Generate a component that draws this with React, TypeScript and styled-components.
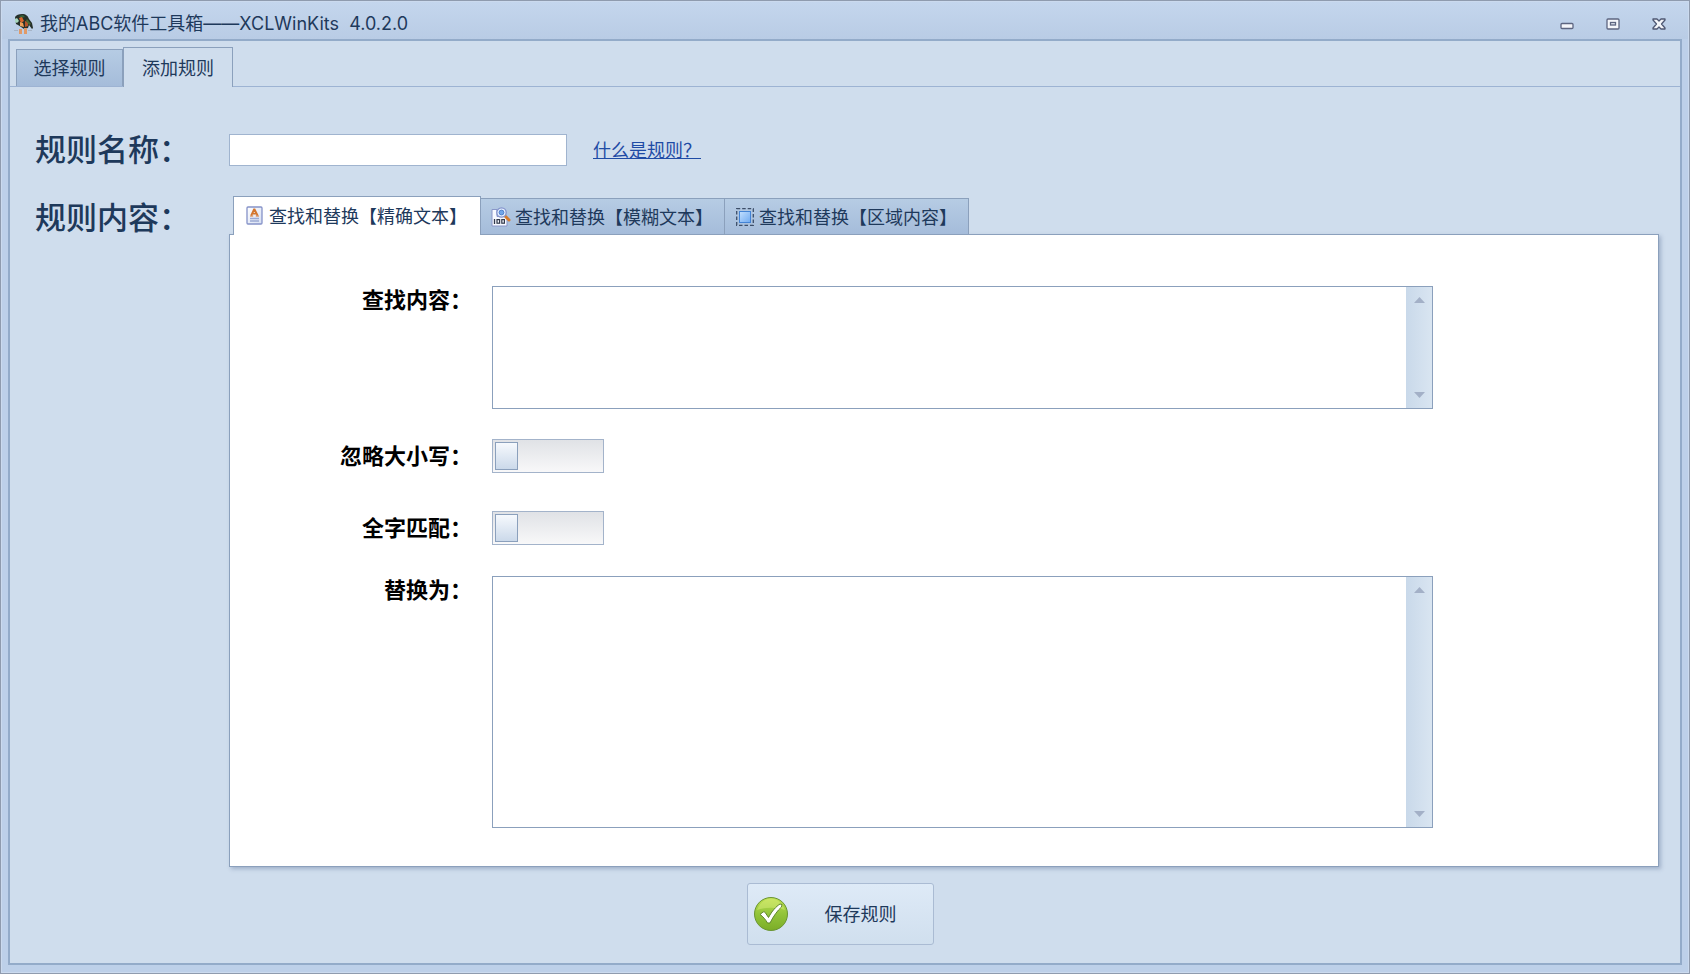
import React, { useState } from "react";
import styled, { createGlobalStyle, css } from "styled-components";

const ui = `"Noto Sans", "Noto Sans CJK SC", sans-serif`;
const navy = "#1e395b";
const line = "#8ba0bc";

const GlobalStyle = createGlobalStyle`
  *, *::before, *::after { box-sizing: border-box; }
  body { margin: 0; font-family: ${ui}; font-size: 18px; line-height: 24px; color: ${navy}; }
  button, input, textarea { font: inherit; color: inherit; }
`;

const Window = styled.div`
  display: flex;
  flex-direction: column;
  min-height: 100vh;
  padding: 0 7px 8px;
  border: 1px solid #8f9bae;
  background: #bdd0e9;
  box-shadow: inset 0 0 0 1px #cbdaee;
`;

const TitleBar = styled.header`
  display: flex;
  align-items: center;
  height: 37px;
  margin: 1px -6px 0;
  padding: 6px 15px 0 12px;
  background: linear-gradient(#c4d6ed, #b9cce5);
`;

const AppTitle = styled.h1`
  flex: 1;
  margin: 0 0 0 6px;
  font-family: Inter, "Noto Sans CJK SC", sans-serif;
  font-size: 18px;
  font-weight: 400;
  line-height: 24px;
  white-space: pre;
`;

const WindowButtons = styled.div`
  display: flex;
  gap: 18px;
`;

const WindowButton = styled.button`
  display: grid;
  place-items: center;
  width: 28px;
  height: 24px;
  padding: 0;
  border: 0;
  background: none;
`;

const Frame = styled.main`
  flex: 1;
  border: 2px solid #93abc9;
  background: #cfdded;
`;

const MainTabs = styled.nav`
  display: flex;
  align-items: flex-end;
  height: 46px;
  padding-left: 6px;
  border-bottom: 1px solid #9db3d3;
`;

const tabFace = css<{ $active: boolean; $page: string }>`
  border: 1px solid ${line};
  border-bottom: 0;
  background: ${(p) => (p.$active ? p.$page : "linear-gradient(#b6cce4, #a5bcda)")};
`;

const MainTab = styled.button<{ $active: boolean; $page: string }>`
  ${tabFace}
  width: ${(p) => (p.$active ? 110 : 107)}px;
  height: ${(p) => (p.$active ? 40 : 37)}px;
  margin-bottom: ${(p) => (p.$active ? -1 : 0)}px;
  padding: 0;
`;

const Form = styled.form`
  display: grid;
  grid-template-columns: 194px 1fr;
  padding: 47px 21px 18px 25px;
`;

const FormLabel = styled.label`
  font-size: 31px;
  font-weight: 500;
  line-height: 30px;
  white-space: nowrap;
`;

const NameRow = styled.div`
  display: flex;
  align-items: center;
  gap: 26px;
  margin-bottom: 30px;
`;

const NameInput = styled.input`
  width: 338px;
  height: 32px;
  padding: 0 6px;
  border: 1px solid #a0b4cf;
  background: #fff;
`;

const HelpLink = styled.a`
  color: #1f4ba5;
`;

const ContentLabel = styled.span`
  padding-top: 6px;
  font-size: 31px;
  font-weight: 500;
  line-height: 30px;
  white-space: nowrap;
`;

const RuleTabs = styled.div`
  display: flex;
  align-items: flex-end;
  height: 38px;
  padding-left: 4px;
`;

const RuleTab = styled.button<{ $active: boolean; $page: string }>`
  ${tabFace}
  display: flex;
  align-items: center;
  gap: 4px;
  width: ${(p) => (p.$active ? 248 : 245)}px;
  height: ${(p) => (p.$active ? 39 : 36)}px;
  margin-bottom: ${(p) => (p.$active ? -1 : 0)}px;
  padding: 0 0 0 ${(p) => (p.$active ? 11 : 10)}px;
  white-space: nowrap;
  z-index: 1;

  & + & {
    margin-left: -1px;
  }
`;

const Panel = styled.section`
  display: grid;
  grid-template-columns: 242px 1fr;
  column-gap: 20px;
  padding: 51px 225px 38px 0;
  border: 1px solid ${line};
  background: #fff;
  box-shadow: 2px 2px 4px rgba(90, 110, 150, 0.4);
`;

const FieldLabel = styled.label`
  color: #000;
  font-size: 22px;
  font-weight: 700;
  line-height: 26px;
  text-align: right;
  white-space: nowrap;
`;

const TextField = styled.div<{ $height: number }>`
  display: flex;
  height: ${(p) => p.$height}px;
  border: 1px solid ${line};
`;

const TextArea = styled.textarea`
  flex: 1;
  min-width: 0;
  padding: 4px 6px;
  border: 0;
  resize: none;
  overflow: hidden;
  background: #fff;
`;

const ScrollRail = styled.div`
  display: flex;
  flex-direction: column;
  justify-content: space-between;
  width: 26px;
  background: linear-gradient(90deg, #c9d9ea, #d9e5f1);
`;

const ScrollButton = styled.button`
  display: grid;
  place-items: center;
  height: 26px;
  padding: 0;
  border: 0;
  background: none;
`;

const Switch = styled.input`
  appearance: none;
  display: flex;
  width: 112px;
  height: 34px;
  margin: 0;
  padding: 2px;
  border: 1px solid #a3b3ca;
  background: linear-gradient(#e0e2e6, #f8f8f9);

  &::before {
    content: "";
    width: 23px;
    border: 1px solid ${line};
    background: linear-gradient(#f6f9fd, #cbd9ea);
  }

  &:checked {
    justify-content: flex-end;
  }
`;

const SwitchLabel = styled(FieldLabel)`
  padding-top: 3px;
`;

const RowGap = styled.div<{ $size: number }>`
  grid-column: 1 / -1;
  height: ${(p) => p.$size}px;
`;

const Actions = styled.div`
  grid-column: 1 / -1;
  display: flex;
  justify-content: center;
  padding: 16px 14px 0 0;
`;

const SaveButton = styled.button`
  display: flex;
  align-items: center;
  gap: 36px;
  width: 187px;
  height: 62px;
  padding: 0 5px;
  border: 1px solid #aabbd3;
  border-radius: 3px;
  background: linear-gradient(#deeaf7, #d0dfee);
`;

const MascotIcon = () => (
  <svg width="20" height="22" viewBox="0 0 20 22" aria-hidden="true">
    <path d="M1 4C2 2 5 1 8 1c4 0 6 2 7 5l3 4 1 5-1 1-3-4-1 3-4 1-3-2-3-2-2-1z" fill="#26302a" />
    <path d="M1 6l2-1 2 3-2 2-2-1z" fill="#a9d8c0" />
    <path d="M5 3l4-1 2 2-4 1z" fill="#35603a" />
    <path d="M5 5l3-1 2 4-3 2z" fill="#d8662b" />
    <path d="M6 9l3 1 1 4-4-1z" fill="#f0a058" />
    <path d="M11 8l3 1v4l-3 1z" fill="#b5542a" />
    <path d="M13 6l4 5-2 1-3-4z" fill="#4c6b35" />
    <path d="M5 16h3v5H5zM10 15h3v6h-3z" fill="#e09a68" />
    <path d="M0 17.500h4M14 17.500h4" stroke="#a7b4c6" />
  </svg>
);

const MinimizeIcon = () => (
  <svg width="14" height="12" viewBox="0 0 14 12" aria-hidden="true">
    <rect x="1" y="5.500" width="12" height="5" rx="1" fill="#f4f6fa" stroke="#5d6580" strokeWidth="1.300" />
  </svg>
);

const MaximizeIcon = () => (
  <svg width="14" height="12" viewBox="0 0 14 12" aria-hidden="true">
    <rect x="1" y="1" width="12" height="10" rx="1" fill="#f4f6fa" stroke="#5d6580" strokeWidth="1.300" />
    <rect x="4.500" y="4.500" width="5" height="2.500" fill="#e3e8f1" stroke="#5d6580" strokeWidth="1.300" />
  </svg>
);

const CloseIcon = () => (
  <svg width="14" height="12" viewBox="0 0 14 12" aria-hidden="true">
    <path
      d="M1 1h4l2 2 2-2h4v1L9.500 6 13 10v1H9L7 9l-2 2H1v-1l3.500-4L1 2z"
      fill="#f4f6fa"
      stroke="#4f5873"
      strokeWidth="1.300"
      strokeLinejoin="round"
    />
  </svg>
);

const ExactIcon = () => (
  <svg width="20" height="20" viewBox="-1 0 20 20" aria-hidden="true">
    <defs>
      <linearGradient id="sheet" x1="0" y1="0" x2="1" y2="1">
        <stop offset="0" stopColor="#fff" />
        <stop offset="1" stopColor="#d5def2" />
      </linearGradient>
    </defs>
    <rect x="1" y="1" width="15" height="17" rx="1" fill="url(#sheet)" stroke="#8592c8" strokeWidth="1.300" />
    <path d="M5.200 9.500L8 3.500h.6l3 6M6.300 7.600h4" fill="none" stroke="#d4752c" strokeWidth="1.800" />
    <path d="M4 10h3.200M9.800 10h3.200" stroke="#d4752c" strokeWidth="1.200" />
    <path d="M4 12.500h9M4 15h9" stroke="#9ba9d2" strokeWidth="1.300" />
  </svg>
);

const FuzzyIcon = () => (
  <svg width="20" height="20" viewBox="0 0 20 20" aria-hidden="true">
    <path d="M1 2.500h5v7h10V19H1z" fill="#f7f9ff" stroke="#8996c8" />
    <path d="M14 9l4 4" stroke="#d87c2d" strokeWidth="3" strokeLinecap="round" />
    <circle cx="10.500" cy="5.500" r="4.700" fill="#e6efff" stroke="#8292cb" strokeWidth="1.300" />
    <circle cx="10.500" cy="5.500" r="2.400" fill="#70a6ea" stroke="#4f80cb" />
    <path d="M3.500 12v5" stroke="#333a4c" strokeWidth="1.300" />
    <rect x="6" y="12.600" width="2.600" height="3.600" fill="none" stroke="#333a4c" strokeWidth="1.200" />
    <rect x="10.800" y="12.600" width="2.600" height="3.600" fill="none" stroke="#333a4c" strokeWidth="1.200" />
  </svg>
);

const RegionIcon = () => (
  <svg width="20" height="18" viewBox="-1 0 20 18" aria-hidden="true">
    <defs>
      <linearGradient id="region" x1="0" y1="0" x2="1" y2="1">
        <stop offset="0" stopColor="#c3e0ff" />
        <stop offset="1" stopColor="#6faaf0" />
      </linearGradient>
    </defs>
    <rect x="0.700" y="0.700" width="16.600" height="16.600" fill="none" stroke="#3d4e68" strokeWidth="1.300" strokeDasharray="3.500 2" />
    <rect x="3.500" y="3.500" width="11" height="11" fill="url(#region)" stroke="#4383d4" />
  </svg>
);

const CheckIcon = () => (
  <svg width="36" height="36" viewBox="0 0 36 36" aria-hidden="true">
    <defs>
      <linearGradient id="leaf" x1="0" y1="0" x2="0" y2="1">
        <stop offset="0" stopColor="#bfe052" />
        <stop offset="0.500" stopColor="#92c43a" />
        <stop offset="1" stopColor="#7bad27" />
      </linearGradient>
    </defs>
    <circle cx="18" cy="18" r="16.500" fill="url(#leaf)" stroke="#6a9534" />
    <path d="M4 14C7 5 14 2.500 18 2.500S29 5 32 14c-8-3-20-3-28 0z" fill="#dcf07e" opacity="0.450" />
    <path
      d="M7 18.500l3-2.500c1-.5 2 0 2.500 1l3 4.500C19 15 23 10.500 27 8l2 .5-.5 2.500c-4 3.500-8 9-11.500 16h-2.500C12.500 23.500 10 20.500 7 18.500z"
      fill="#fff"
      stroke="#5f862b"
    />
  </svg>
);

const ScrollArrow = ({ up }: { up?: boolean }) => (
  <svg width="11" height="6" viewBox="0 0 11 6" aria-hidden="true">
    <path d={up ? "M0 6L5.500 0 11 6z" : "M0 0L5.500 6 11 0z"} fill="#a3b0c7" />
  </svg>
);

const ScrollableText = ({ id, height }: { id: string; height: number }) => (
  <TextField $height={height}>
    <TextArea id={id} />
    <ScrollRail>
      <ScrollButton type="button" aria-label="向上滚动">
        <ScrollArrow up />
      </ScrollButton>
      <ScrollButton type="button" aria-label="向下滚动">
        <ScrollArrow />
      </ScrollButton>
    </ScrollRail>
  </TextField>
);

const mainTabs = ["选择规则", "添加规则"];
const ruleTabs = [
  { label: "查找和替换【精确文本】", Icon: ExactIcon },
  { label: "查找和替换【模糊文本】", Icon: FuzzyIcon },
  { label: "查找和替换【区域内容】", Icon: RegionIcon },
];

export default function App() {
  const [mainTab, setMainTab] = useState(1);
  const [ruleTab, setRuleTab] = useState(0);

  return (
    <Window lang="zh-CN">
      <GlobalStyle />
      <TitleBar>
        <MascotIcon />
        <AppTitle>我的ABC软件工具箱——XCLWinKits  4.0.2.0</AppTitle>
        <WindowButtons>
          <WindowButton type="button" aria-label="最小化"><MinimizeIcon /></WindowButton>
          <WindowButton type="button" aria-label="最大化"><MaximizeIcon /></WindowButton>
          <WindowButton type="button" aria-label="关闭"><CloseIcon /></WindowButton>
        </WindowButtons>
      </TitleBar>
      <Frame>
        <MainTabs>
          {mainTabs.map((label, i) => (
            <MainTab key={label} type="button" $active={i === mainTab} $page="#cfdded" onClick={() => setMainTab(i)}>
              {label}
            </MainTab>
          ))}
        </MainTabs>
        <Form onSubmit={(e) => e.preventDefault()}>
          <FormLabel htmlFor="rule-name">规则名称：</FormLabel>
          <NameRow>
            <NameInput id="rule-name" type="text" />
            <HelpLink href="#help">什么是规则？</HelpLink>
          </NameRow>
          <ContentLabel>规则内容：</ContentLabel>
          <div>
            <RuleTabs>
              {ruleTabs.map(({ label, Icon }, i) => (
                <RuleTab key={label} type="button" $active={i === ruleTab} $page="#fff" onClick={() => setRuleTab(i)}>
                  <Icon />
                  {label}
                </RuleTab>
              ))}
            </RuleTabs>
            <Panel>
              <FieldLabel htmlFor="find">查找内容：</FieldLabel>
              <ScrollableText id="find" height={123} />
              <RowGap $size={30} />
              <SwitchLabel htmlFor="ignore-case">忽略大小写：</SwitchLabel>
              <Switch id="ignore-case" type="checkbox" />
              <RowGap $size={38} />
              <SwitchLabel htmlFor="whole-word">全字匹配：</SwitchLabel>
              <Switch id="whole-word" type="checkbox" />
              <RowGap $size={31} />
              <FieldLabel htmlFor="replace">替换为：</FieldLabel>
              <ScrollableText id="replace" height={252} />
            </Panel>
          </div>
          <Actions>
            <SaveButton type="submit">
              <CheckIcon />
              保存规则
            </SaveButton>
          </Actions>
        </Form>
      </Frame>
    </Window>
  );
}
